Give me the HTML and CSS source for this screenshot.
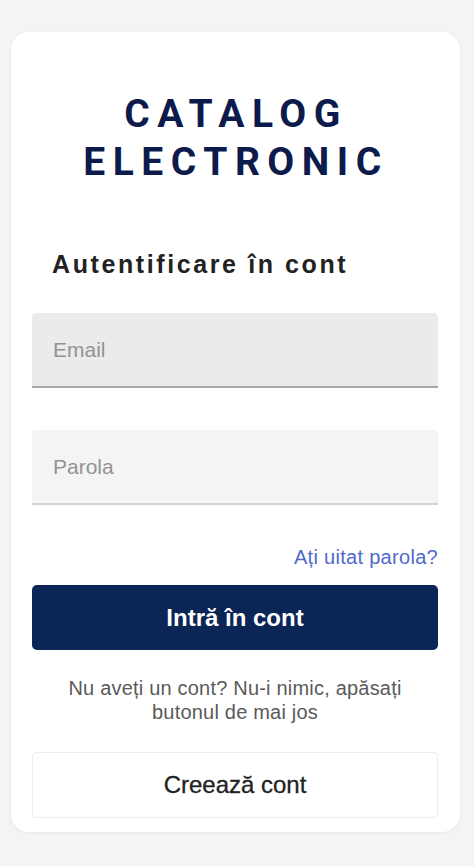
FILE: index.html
```html
<!DOCTYPE html>
<html lang="ro">
<head>
    <meta charset="UTF-8">
    <meta name="viewport" content="width=device-width, initial-scale=1.0">
    <title>Catalog Electronic - Autentificare</title>
    <link rel="stylesheet" href="styles.css">
</head>
<body>
    <div class="page">
        <div class="card">
            <h1 class="logo">CATALOG<br>ELECTRONIC</h1>
            <h2 class="subtitle">Autentificare în cont</h2>
            <form class="login-form">
                <div class="field field-active">
                    <input type="text" placeholder="Email">
                </div>
                <div class="field">
                    <input type="password" placeholder="Parola">
                </div>
                <div class="forgot">
                    <a href="#">Ați uitat parola?</a>
                </div>
                <button type="button" class="btn-primary">Intră în cont</button>
            </form>
            <p class="hint">Nu aveți un cont? Nu-i nimic, apăsați butonul de mai jos</p>
            <button type="button" class="btn-secondary">Creează cont</button>
        </div>
    </div>
</body>
</html>
```

FILE: styles.css
```css
*{
    margin: 0;
    padding: 0;
    box-sizing: border-box;
}

body{
    background-color: #f4f4f4;
    font-family: "Liberation Sans", Arial, sans-serif;
}
.page{
    padding: 32px 14px 34px 11px;
}
.card{
    background-color: #fff;
    border-radius: 18px;
    box-shadow: 0 1px 4px rgba(0,0,0,0.06);
    padding: 58px 22px 14px 21px;
    display: flex;
    flex-direction: column;
}
.logo{
    font-family: Roboto, "Liberation Sans", sans-serif;
    font-weight: 700;
    font-size: 39px;
    line-height: 48px;
    letter-spacing: 7.5px;
    color: #0c1a4c;
    text-align: center;
    padding-left: 2px;
}
.subtitle{
    margin-top: 62px;
    padding-left: 20px;
    font-size: 25px;
    line-height: 32px;
    font-weight: 700;
    letter-spacing: 2.6px;
    color: #222;
}
.login-form{
    display: flex;
    flex-direction: column;
    margin-top: 33px;
}
.field{
    background-color: #f4f4f4;
    border-bottom: 2px solid #d4d4d4;
    border-radius: 4px 4px 0 0;
    height: 75px;
    margin-bottom: 42px;
}
.field-active{
    background-color: #ebebeb;
    border-bottom-color: #a8a8a8;
}
.field input{
    width: 100%;
    height: 100%;
    border: none;
    background: transparent;
    padding: 0 21px;
    font-family: "Liberation Sans", Arial, sans-serif;
    font-size: 21px;
    color: #333;
    outline: none;
}
.field input::placeholder{
    color: #939393;
}
.forgot{
    text-align: right;
    line-height: 20px;
    height: 20px;
}
.forgot a{
    color: #4f69c9;
    font-size: 20px;
    letter-spacing: 0.3px;
    text-decoration: none;
}
.btn-primary{
    margin-top: 18px;
    height: 65px;
    border: none;
    border-radius: 5px;
    background-color: #0b2557;
    color: #fff;
    font-family: "Liberation Sans", Arial, sans-serif;
    font-size: 24px;
    font-weight: 700;
}
.hint{
    margin-top: 26px;
    padding: 0 20px;
    text-align: center;
    font-size: 20px;
    line-height: 24px;
    letter-spacing: 0.2px;
    color: #5a5a5a;
}
.btn-secondary{
    margin-top: 28px;
    height: 66px;
    border: 1px solid #ececec;
    border-radius: 4px;
    background-color: #fff;
    color: #222;
    font-family: "Liberation Sans", Arial, sans-serif;
    font-size: 24px;
    -webkit-text-stroke: 0.3px #222;
}
```
